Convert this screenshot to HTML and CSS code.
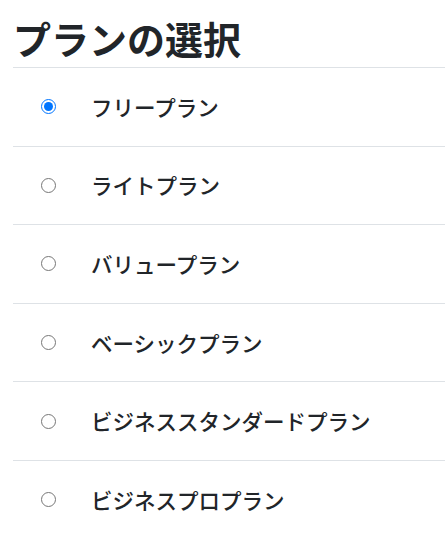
FILE: index.html
```html
<!DOCTYPE html>
<html lang="ja">
<head>
<meta charset="utf-8">
<link rel="stylesheet" href="styles.css">
</head>
<body>
<div class="page">
  <h1 class="title">プランの選択</h1>
  <ul class="plans">
    <li class="plan"><label class="plan-label"><input class="radio" type="radio" name="plan" checked><span class="plan-name">フリープラン</span></label></li>
    <li class="plan"><label class="plan-label"><input class="radio" type="radio" name="plan"><span class="plan-name">ライトプラン</span></label></li>
    <li class="plan"><label class="plan-label"><input class="radio" type="radio" name="plan"><span class="plan-name">バリュープラン</span></label></li>
    <li class="plan"><label class="plan-label"><input class="radio" type="radio" name="plan"><span class="plan-name">ベーシックプラン</span></label></li>
    <li class="plan"><label class="plan-label"><input class="radio" type="radio" name="plan"><span class="plan-name">ビジネススタンダードプラン</span></label></li>
    <li class="plan"><label class="plan-label"><input class="radio" type="radio" name="plan"><span class="plan-name">ビジネスプロプラン</span></label></li>
  </ul>
</div>
</body>
</html>
```

FILE: styles.css
```css
html, body {
  margin: 0;
  padding: 0;
  background: #fff;
}
body {
  font-family: "Noto Sans CJK JP", "Noto Sans", sans-serif;
  color: #212529;
}
.page {
  padding-left: 13px;
}
.title {
  margin: 0;
  box-sizing: border-box;
  height: 67px;
  padding-top: 8px;
  font-size: 38px;
  line-height: 50px;
  font-weight: 700;
  display: flex;
  align-items: center;
}
.plans {
  list-style: none;
  margin: 0;
  padding: 0;
  border-top: 1px solid #dee2e6;
}
.plan {
  border-bottom: 1px solid #dee2e6;
}
.plan-label {
  display: flex;
  align-items: center;
  height: 77.6px;
}
.radio {
  width: 15px;
  height: 15px;
  margin: 0 0 0 28px;
  accent-color: #0075ff;
}
.plan-name {
  margin-left: 35px;
  font-size: 21.5px;
  font-weight: 500;
  line-height: 30px;
}
```
